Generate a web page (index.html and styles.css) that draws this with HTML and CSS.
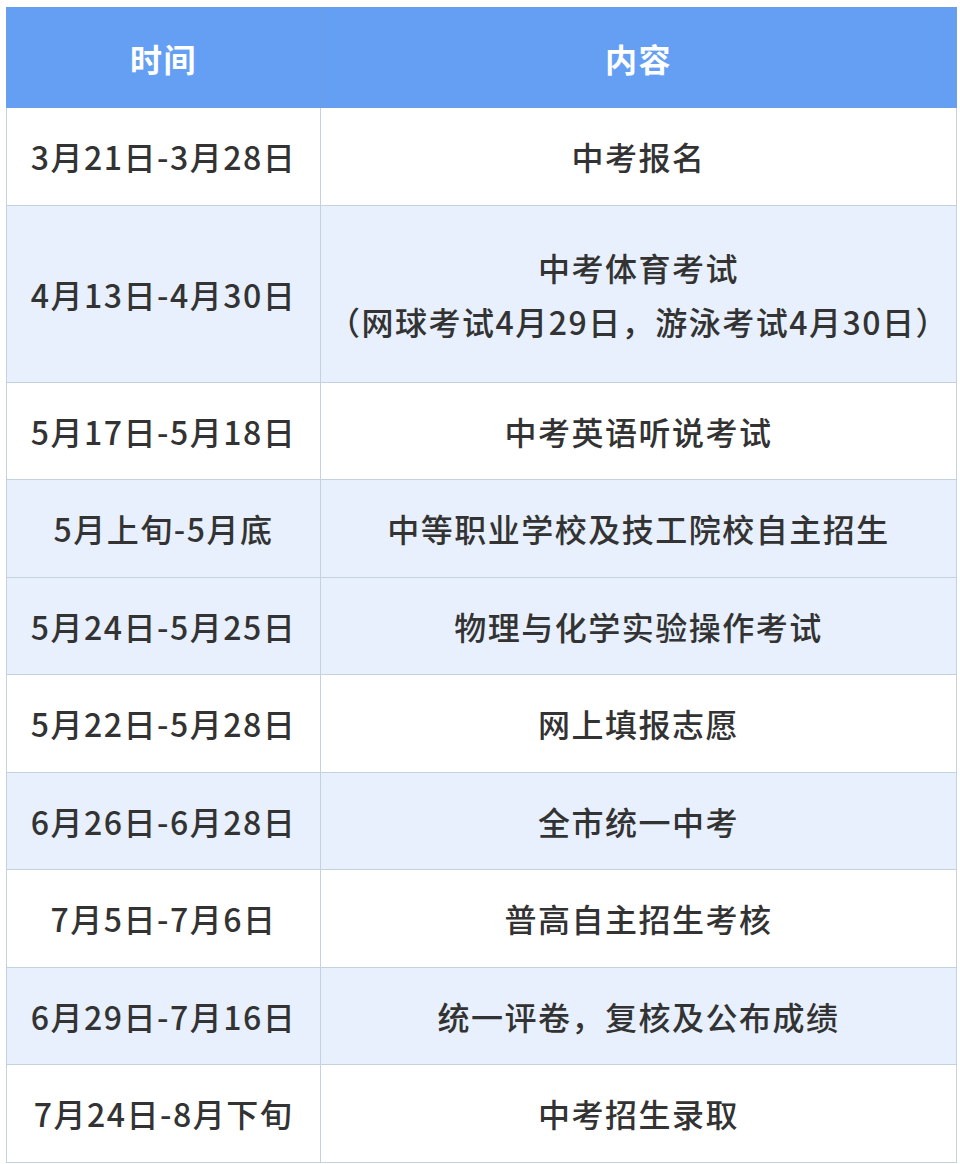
FILE: index.html
```html
<!DOCTYPE html>
<html lang="zh-CN">
<head>
<meta charset="utf-8">
<link rel="stylesheet" href="styles.css">
</head>
<body>
<div class="page">
<table class="schedule">
  <thead>
    <tr><th class="col-time">时间</th><th class="col-content">内容</th></tr>
  </thead>
  <tbody>
    <tr class="white"><td>3月21日-3月28日</td><td>中考报名</td></tr>
    <tr class="blue tall"><td>4月13日-4月30日</td><td>中考体育考试<br>（网球考试4月29日，游泳考试4月30日）</td></tr>
    <tr class="white"><td>5月17日-5月18日</td><td>中考英语听说考试</td></tr>
    <tr class="blue"><td>5月上旬-5月底</td><td>中等职业学校及技工院校自主招生</td></tr>
    <tr class="blue"><td>5月24日-5月25日</td><td>物理与化学实验操作考试</td></tr>
    <tr class="white"><td>5月22日-5月28日</td><td>网上填报志愿</td></tr>
    <tr class="blue"><td>6月26日-6月28日</td><td>全市统一中考</td></tr>
    <tr class="white"><td>7月5日-7月6日</td><td>普高自主招生考核</td></tr>
    <tr class="blue"><td>6月29日-7月16日</td><td>统一评卷，复核及公布成绩</td></tr>
    <tr class="white"><td>7月24日-8月下旬</td><td>中考招生录取</td></tr>
  </tbody>
</table>
</div>
</body>
</html>
```

FILE: styles.css
```css
html, body {
  margin: 0;
  padding: 0;
  background: #ffffff;
}

.page {
  padding: 7px 3px 0 6px;
}

.schedule {
  width: 951px;
  border-collapse: collapse;
  table-layout: fixed;
  font-family: "Noto Sans CJK SC", "Noto Sans", sans-serif;
  font-size: 32px;
  letter-spacing: 1.5px;
  color: #333333;
}

.schedule th,
.schedule td {
  border: 1px solid #c4d2df;
  text-align: center;
  vertical-align: middle;
  padding: 0;
}

.schedule th {
  height: 99px;
  background: #659ff4;
  color: #ffffff;
  font-weight: 700;
  border-color: #6a9fe8;
}

.col-time {
  width: 313px;
}

.schedule td {
  height: 96.5px;
  font-weight: 500;
  line-height: 54px;
}

.schedule tr.tall td {
  height: 176px;
}

.schedule tr.white td {
  background: #ffffff;
}

.schedule tr.blue td {
  background: #e7f0fc;
}
```
